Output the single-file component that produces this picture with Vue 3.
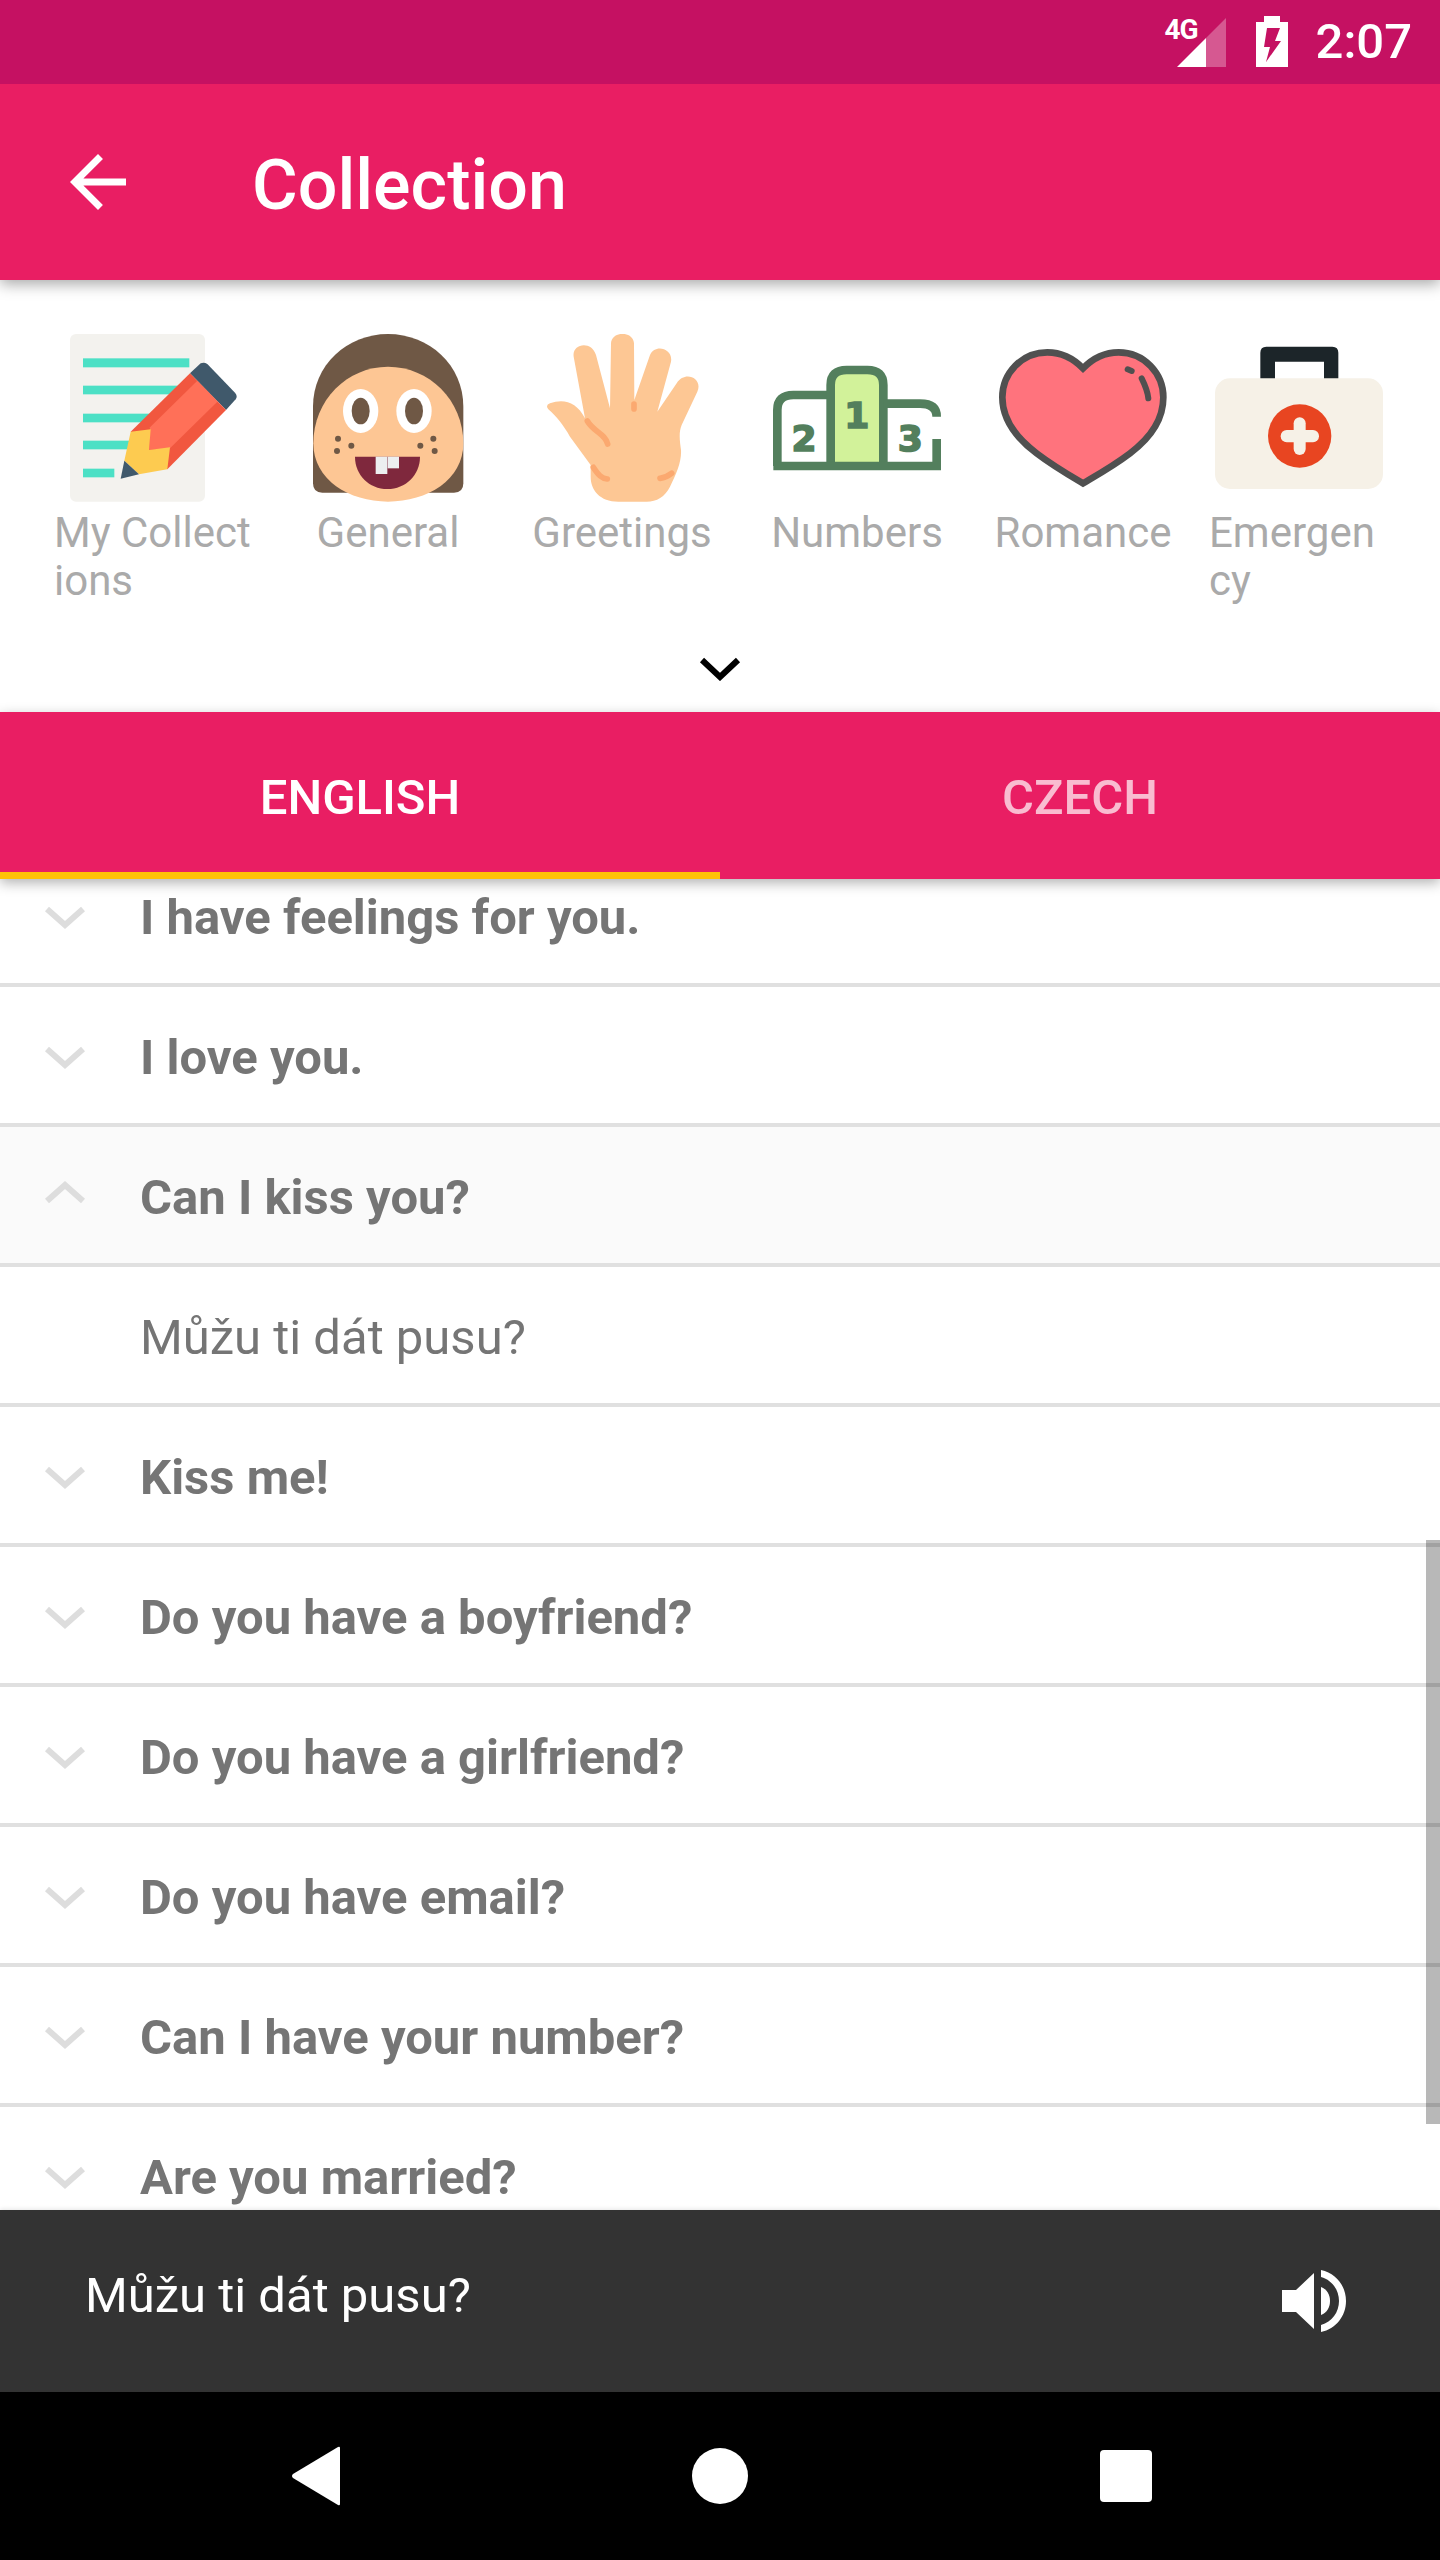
<template>
  <div class="screen">
    <div class="status-bar">
      <span class="net">4G</span>
      <svg class="signal" width="50" height="50" viewBox="0 0 50 50">
        <path d="M1 50 L30 21 V50 Z" fill="#fff" />
        <path d="M30 21 L50 1 V50 H30 Z" fill="#fff" fill-opacity="0.3" />
      </svg>
      <svg class="battery" width="32" height="51" viewBox="0 0 32 51">
        <path d="M8 0 H24 V6 H32 V51 H0 V6 H8 Z M11 12 H24 L19 25 H25 L10 46 L14 31 H8 Z" fill="#fff" fill-rule="evenodd" />
      </svg>
      <span class="clock">2:07</span>
    </div>

    <header class="app-bar">
      <svg class="back" width="84" height="84" viewBox="0 0 24 24">
        <path d="M20 11H7.83l5.59-5.59L12 4l-8 8 8 8 1.41-1.41L7.83 13H20v-2z" fill="#fff" />
      </svg>
      <h1 class="title">Collection</h1>
    </header>

    <section class="panel">
      <div class="categories">
        <div v-for="cat in categories" :key="cat.label" class="category" :class="cat.cls">
          <svg v-if="cat.icon === 'notes'" class="cat-icon" viewBox="120 72 504 504">
            <rect x="120" y="72" width="405" height="503" rx="18" fill="#f3f2ee" />
            <g fill="#4ce0c5">
              <rect x="159" y="145" width="319" height="27" />
              <rect x="159" y="227" width="290" height="26" />
              <rect x="159" y="311" width="200" height="26" />
              <rect x="159" y="392" width="150" height="26" />
              <rect x="159" y="476" width="94" height="26" />
            </g>
            <path d="M480 190 L512 160 Q522 155 532 162 L615 248 Q624 258 617 268 L588 300 Z" fill="#40596b" />
            <path d="M480 190 L588 300 L412 478 L302 365 Z" fill="#f1573f" />
            <path d="M502 212 L562 275 L420 415 L357 420 L360 352 Z" fill="#ff7058" />
            <path d="M302 365 L362 358 L357 420 L420 412 L412 478 L327 493 L283 452 Z" fill="#fdcb50" />
            <path d="M283 452 L327 493 L272 506 Z" fill="#40596b" />
          </svg>

          <svg v-else-if="cat.icon === 'face'" class="cat-icon" viewBox="820 72 504 504">
            <path d="M847 520 V290 C847 165 950 72 1072 72 C1195 72 1298 165 1298 290 V520 Q1298 548 1270 548 H875 Q847 548 847 520 Z" fill="#6f5845" />
            <path d="M848 400 C848 270 950 170 1072 170 C1195 170 1298 270 1298 400 C1298 510 1190 575 1072 575 C955 575 848 510 848 400 Z" fill="#fdc694" />
            <ellipse cx="990" cy="303" rx="53" ry="66" fill="#fff" />
            <ellipse cx="1150" cy="303" rx="53" ry="66" fill="#fff" />
            <ellipse cx="990" cy="303" rx="27" ry="40" fill="#6f5845" />
            <ellipse cx="1150" cy="303" rx="27" ry="40" fill="#6f5845" />
            <g fill="#6f5845">
              <circle cx="922" cy="386" r="9" />
              <circle cx="962" cy="407" r="9" />
              <circle cx="919" cy="423" r="9" />
              <circle cx="1208" cy="386" r="9" />
              <circle cx="1169" cy="407" r="9" />
              <circle cx="1212" cy="423" r="9" />
            </g>
            <path d="M973 440 H1168 C1168 495 1125 537 1070 537 C1015 537 973 495 973 440 Z" fill="#7f283d" />
            <rect x="1035" y="440" width="35" height="52" fill="#eceff0" />
            <rect x="1071" y="440" width="34" height="35" fill="#eceff0" />
          </svg>

          <svg v-else-if="cat.icon === 'hand'" class="cat-icon" viewBox="114 72 504 504">
            <path d="M272 465 L210 380 C190 345 170 320 145 298 Q135 285 150 280 C190 265 230 275 255 325 L221 140 C215 100 275 90 288 135 L330 295 L333 100 C335 62 400 62 402 100 L403 270 L450 135 C465 100 520 115 513 155 L472 305 L530 220 C555 180 610 205 592 245 L545 345 C535 370 540 395 543 420 C545 455 530 490 510 530 C495 560 470 575 440 575 H355 C300 575 272 540 272 500 Z" fill="#fdc794" />
            <g fill="none" stroke="#fba970" stroke-width="17" stroke-linecap="round">
              <path d="M262 333 C280 365 315 370 323 402" />
              <path d="M402 282 V297" />
              <path d="M280 472 C295 495 305 505 322 507" />
              <path d="M480 505 C495 503 505 498 515 490" />
            </g>
          </svg>

          <svg v-else-if="cat.icon === 'podium'" class="cat-icon" viewBox="819 72 504 504">
            <path d="M992 468 V225 Q992 180 1040 180 H1102 Q1150 180 1150 225 V468 Z" fill="#d2f29a" />
            <g fill="none" stroke="#537f5d" stroke-width="26">
              <path d="M832 468 V300 Q832 255 880 255 H992" />
              <path d="M992 468 V225 Q992 180 1040 180 H1102 Q1150 180 1150 225 V468" />
              <path d="M1150 281 H1260 Q1310 281 1310 320" />
              <path d="M1310 387 V468" />
              <path d="M820 468 H1323" />
            </g>
            <g class="podium-num" fill="#537f5d" stroke="#537f5d" text-anchor="middle">
              <text x="1070" y="355">1</text>
              <text x="912" y="422">2</text>
              <text x="1231" y="422">3</text>
            </g>
          </svg>

          <svg v-else-if="cat.icon === 'heart'" class="cat-icon" viewBox="117 72 504 504">
            <path d="M369 175 C335 140 300 127 262 127 C185 127 127 190 127 262 C127 330 170 385 230 430 C280 468 330 497 369 520 C408 497 460 468 510 430 C570 385 610 330 610 262 C610 190 552 127 476 127 C438 127 403 140 369 175 Z" fill="#ff737d" stroke="#505050" stroke-width="20" />
            <g fill="none" stroke="#505050" stroke-width="18" stroke-linecap="round">
              <path d="M503 178 L515 183" />
              <path d="M545 205 C555 225 563 245 565 265" />
            </g>
          </svg>

          <svg v-else class="cat-icon" viewBox="765 72 504 504">
            <path d="M901 210 V128 Q901 110 919 110 H1117 Q1135 110 1135 128 V210 H1092 V155 H945 V210 Z" fill="#1c2529" />
            <rect x="765" y="205" width="504" height="332" rx="45" fill="#f6f1e7" />
            <circle cx="1019" cy="378" r="95" fill="#e84521" />
            <rect x="1001" y="322" width="36" height="113" rx="18" fill="#f6f1e7" />
            <rect x="962" y="360" width="115" height="37" rx="18" fill="#f6f1e7" />
          </svg>
          <p class="cat-label">{{ cat.label }}</p>
        </div>
      </div>
      <svg class="expand" width="42" height="24" viewBox="0 0 42 24">
        <path d="M3 3 L21 20 L39 3" fill="none" stroke="#000" stroke-width="6" />
      </svg>
    </section>

    <nav class="tabs">
      <div class="tab active">ENGLISH</div>
      <div class="tab">CZECH</div>
    </nav>

    <main class="list">
      <div class="list-scroll">
        <div
          v-for="row in rows"
          :key="row.text"
          class="row"
          :class="{ open: row.open, answer: row.answer }"
        >
          <svg v-if="!row.answer" class="chevron" width="42" height="42" viewBox="0 0 42 42">
            <path v-if="row.open" d="M3 27 L21 11 L39 27" />
            <path v-else d="M3 15 L21 31 L39 15" />
          </svg>
          <span class="row-text">{{ row.text }}</span>
        </div>
      </div>
      <div class="scrollbar"></div>
    </main>

    <footer class="player">
      <span class="player-text">Můžu ti dát pusu?</span>
      <svg class="speaker" width="64" height="62" viewBox="0 0 64 62">
        <path d="M0 20 H14 L32 3 V59 L14 42 H0 Z" fill="#fff" />
        <path d="M39 17 C45 19 48 25 48 31 C48 37 45 43 39 45 Z" fill="#fff" />
        <path d="M39 0 C54 3 64 16 64 31 C64 46 54 59 39 62 V55 C50 52 57 42 57 31 C57 20 50 10 39 7 Z" fill="#fff" />
      </svg>
    </footer>

    <div class="nav-bar">
      <svg width="50" height="60" viewBox="0 0 50 60">
        <path d="M49 2 V58 Q49 60 47 59 L2 32 Q0 30 2 28 L47 1 Q49 0 49 2 Z" fill="#fff" />
      </svg>
      <div class="nav-home"></div>
      <div class="nav-recent"></div>
    </div>
  </div>
</template>

<script setup>
const categories = [
  { label: 'My Collections', icon: 'notes' },
  { label: 'General', icon: 'face' },
  { label: 'Greetings', icon: 'hand' },
  { label: 'Numbers', icon: 'podium' },
  { label: 'Romance', icon: 'heart' },
  { label: 'Emergency', icon: 'kit', cls: 'narrow' }
];

const rows = [
  { text: 'I have feelings for you.' },
  { text: 'I love you.' },
  { text: 'Can I kiss you?', open: true },
  { text: 'Můžu ti dát pusu?', answer: true },
  { text: 'Kiss me!' },
  { text: 'Do you have a boyfriend?' },
  { text: 'Do you have a girlfriend?' },
  { text: 'Do you have email?' },
  { text: 'Can I have your number?' },
  { text: 'Are you married?' }
];
</script>

<style scoped>
.screen {
  display: flex;
  flex-direction: column;
  width: 1440px;
  height: 2560px;
  overflow: hidden;
  background: #fff;
  font-family: Roboto, sans-serif;
}

.status-bar {
  position: relative;
  z-index: 4;
  display: flex;
  flex: 0 0 84px;
  align-items: flex-start;
  justify-content: flex-end;
  padding-right: 28px;
  box-sizing: border-box;
  color: #fff;
  background: #c51162;
}

.net {
  margin-top: 14px;
  margin-right: -22px;
  font-size: 28px;
  font-weight: 700;
  line-height: 32px;
  letter-spacing: -1px;
}

.signal {
  margin-top: 17px;
  margin-right: 30px;
}

.battery {
  margin-top: 16px;
  margin-right: 28px;
}

.clock {
  font-size: 49px;
  font-weight: 500;
  line-height: 84px;
}

.app-bar {
  position: relative;
  z-index: 3;
  display: flex;
  flex: 0 0 196px;
  align-items: center;
  padding-left: 56px;
  background: #e91e63;
  box-shadow: 0 4px 14px rgba(0, 0, 0, 0.35);
}

.back {
  margin-right: 112px;
}

.title {
  margin: 0;
  padding-top: 6px;
  font-size: 70px;
  font-weight: 500;
  color: #fff;
}

.panel {
  position: relative;
  z-index: 1;
  display: flex;
  flex: 0 0 432px;
  flex-direction: column;
  box-sizing: border-box;
  padding: 54px 0 0 37px;
  border-radius: 6px;
  background: #fff;
}

.categories {
  display: grid;
  grid-template-columns: 234px 234px 234px 236px 216px 216px;
}

.category {
  display: flex;
  flex-direction: column;
  align-items: center;
}

.cat-icon {
  width: 168px;
  height: 168px;
}

.podium-num {
  font-family: "DejaVu Sans", sans-serif;
  font-size: 108px;
  font-weight: 700;
  stroke-width: 5px;
}

.cat-label {
  max-width: 200px;
  margin: 7px 0 0;
  font-size: 42px;
  line-height: 48px;
  color: #aaa;
  word-break: break-all;
}

.narrow .cat-label {
  max-width: 180px;
}

.expand {
  position: absolute;
  left: 699px;
  top: 377px;
}

.tabs {
  position: relative;
  z-index: 2;
  display: flex;
  flex: 0 0 167px;
  background: #e91e63;
  box-shadow: 0 4px 12px rgba(0, 0, 0, 0.3);
}

.tab {
  display: flex;
  flex: 1;
  align-items: center;
  justify-content: center;
  box-sizing: border-box;
  padding-top: 10px;
  border-bottom: 7px solid transparent;
  font-size: 49px;
  font-weight: 500;
  color: rgba(255, 255, 255, 0.7);
}

.tab.active {
  border-bottom-color: #ffc107;
  color: #fff;
}

.list {
  position: relative;
  flex: 1;
  overflow: hidden;
}

.list-scroll {
  margin-top: -32px;
}

.row {
  display: flex;
  align-items: center;
  height: 140px;
  box-sizing: border-box;
  padding-left: 44px;
  border-bottom: 4px solid #e0e0e0;
}

.row.open {
  background: #fafafa;
}

.row.answer {
  padding-left: 140px;
}

.chevron {
  flex: none;
  margin-right: 54px;
}

.chevron path {
  fill: none;
  stroke: #ddd;
  stroke-width: 6;
}

.row-text {
  padding-top: 4px;
  font-size: 49px;
  font-weight: 700;
  color: #757575;
}

.answer .row-text {
  font-weight: 400;
}

.scrollbar {
  position: absolute;
  top: 661px;
  right: 0;
  width: 14px;
  height: 584px;
  background: rgba(0, 0, 0, 0.28);
}

.player {
  display: flex;
  flex: 0 0 182px;
  align-items: center;
  justify-content: space-between;
  padding: 0 94px 0 85px;
  background: #333;
  box-shadow: 0 -1px 4px rgba(0, 0, 0, 0.1);
}

.player-text {
  margin-bottom: 12px;
  font-size: 49px;
  color: #fff;
}

.nav-bar {
  display: flex;
  flex: 0 0 168px;
  align-items: center;
  background: #000;
  padding-left: 291px;
}

.nav-home {
  width: 56px;
  height: 56px;
  margin-left: 351px;
  border-radius: 50%;
  background: #fff;
}

.nav-recent {
  width: 52px;
  height: 52px;
  margin-left: 352px;
  border-radius: 4px;
  background: #fff;
}
</style>
